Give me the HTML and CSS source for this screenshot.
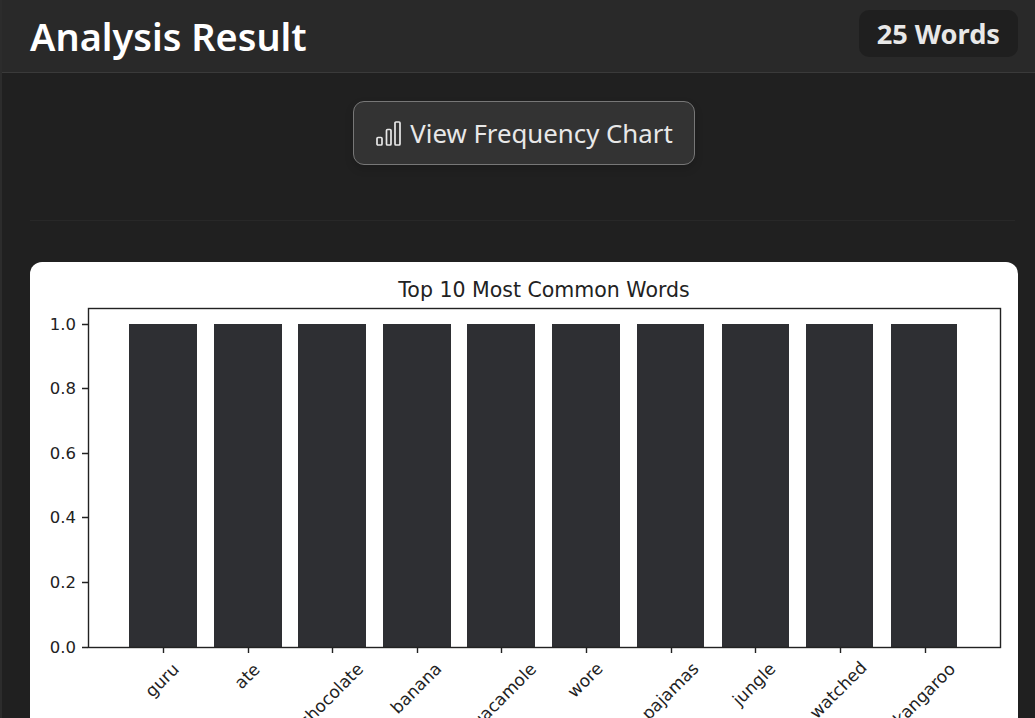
FILE: index.html
```html
<!DOCTYPE html>
<html lang="en">

<head>
    <meta charset="UTF-8">
    <meta name="viewport" content="width=device-width, initial-scale=1.0">
    <title>Analysis Result</title>
    <link rel="stylesheet" href="styles.css">
</head>

<body>
    <div class="panel">
        <header class="panel-header">
            <h1>Analysis Result</h1>
            <span class="word-count">25 Words</span>
        </header>
        <main class="panel-body">
            <div class="actions">
                <button class="chart-btn">
                    <svg class="chart-icon" viewBox="0 0 25 25" fill="none" stroke="currentColor" stroke-width="1.7">
                        <rect x="1" y="16.5" width="5" height="7.5" rx="1" />
                        <rect x="10.5" y="8.5" width="4.5" height="15.5" rx="1" />
                        <rect x="19" y="1" width="5" height="23" rx="1" />
                    </svg>
                    View Frequency Chart
                </button>
            </div>
            <hr class="divider">
            <div class="chart-card">
                <svg class="chart" width="988" height="456" viewBox="0 0 988 456">
                    <text class="chart-title" x="514" y="35">Top 10 Most Common Words</text>

                    <g class="bars">
                        <rect x="99" y="62" width="68" height="323" />
                        <rect x="184" y="62" width="68" height="323" />
                        <rect x="268" y="62" width="68" height="323" />
                        <rect x="353" y="62" width="68" height="323" />
                        <rect x="437" y="62" width="68" height="323" />
                        <rect x="522" y="62" width="68" height="323" />
                        <rect x="607" y="62" width="67" height="323" />
                        <rect x="692" y="62" width="67" height="323" />
                        <rect x="776" y="62" width="67" height="323" />
                        <rect x="861" y="62" width="66" height="323" />
                    </g>

                    <rect class="axes" x="58.5" y="46.5" width="912" height="339" />

                    <g class="ticks">
                        <path d="M52 62.5h6M52 126.5h6M52 191.5h6M52 255.5h6M52 320.5h6M52 385.5h6" />
                        <path d="M133.5 385v6M218.5 385v6M302.5 385v6M387.5 385v6M471.5 385v6M556.5 385v6M641.5 385v6M725.5 385v6M810.5 385v6M895.5 385v6" />
                    </g>

                    <g class="y-labels">
                        <text x="46" y="68">1.0</text>
                        <text x="46" y="132">0.8</text>
                        <text x="46" y="197">0.6</text>
                        <text x="46" y="261">0.4</text>
                        <text x="46" y="326">0.2</text>
                        <text x="46" y="391">0.0</text>
                    </g>

                    <g class="x-labels">
                        <text transform="translate(132 418) rotate(-45)">guru</text>
                        <text transform="translate(217 414) rotate(-45)">ate</text>
                        <text transform="translate(301 433) rotate(-45)">chocolate</text>
                        <text transform="translate(386 426) rotate(-45)">banana</text>
                        <text transform="translate(470 437) rotate(-45)">guacamole</text>
                        <text transform="translate(555 418) rotate(-45)">wore</text>
                        <text transform="translate(640 429) rotate(-45)">pajamas</text>
                        <text transform="translate(724 422) rotate(-45)">jungle</text>
                        <text transform="translate(808 428) rotate(-45)">watched</text>
                        <text transform="translate(894 432) rotate(-45)">kangaroo</text>
                    </g>
                </svg>
            </div>
        </main>
    </div>
</body>

</html>
```

FILE: styles.css
```css
html,
body {
    height: 100%;
}

body {
    margin: 0;
    overflow: hidden;
    background-color: #202020;
    font-family: "Noto Sans", "Open Sans", sans-serif;
    color: #fff;
}

.panel {
    height: 100%;
    border-left: 2px solid #2c2c2c;
}

.panel-header {
    display: flex;
    justify-content: space-between;
    align-items: center;
    height: 72px;
    padding: 0 17px 0 28px;
    background-color: #292929;
    border-bottom: 1px solid #3a3a3a;
}

.panel-header h1 {
    margin: 0;
    font-size: 37.9px;
    font-weight: 600;
}

.word-count {
    margin-bottom: 5px;
    padding: 8px 18px;
    background-color: #1f1f1f;
    border-radius: 10px;
    color: #e8e8e8;
    font-size: 27.2px;
    font-weight: 700;
    line-height: 31px;
}

.panel-body {
    padding: 28px 17px 0 28px;
}

.actions {
    display: flex;
    justify-content: center;
}

.chart-btn {
    display: flex;
    align-items: center;
    gap: 9px;
    height: 64px;
    padding: 0 21px 0 22px;
    background-color: #333;
    border: 1px solid #777;
    border-radius: 11px;
    box-shadow: 0 4px 8px rgba(0, 0, 0, 0.15);
    color: #e8e8e8;
    font-family: inherit;
    font-size: 25.8px;
}

.chart-icon {
    width: 25px;
    height: 25px;
}

.divider {
    height: 1px;
    margin: 55px 3px 41px 0;
    background-color: #282828;
    border: none;
}

.chart-card {
    height: 600px;
    background-color: #fff;
    border-radius: 12px;
    overflow: hidden;
}

.chart {
    display: block;
    font-family: "DejaVu Sans", sans-serif;
    font-size: 16.5px;
}

.chart text {
    fill: #222;
}

.chart .chart-title {
    font-size: 20.5px;
    text-anchor: middle;
}

.bars rect {
    fill: #2e2f33;
}

.axes {
    fill: none;
    stroke: #222;
    stroke-width: 1.4;
}

.ticks path {
    fill: none;
    stroke: #222;
    stroke-width: 1.4;
}

.y-labels text {
    text-anchor: end;
}

.x-labels text {
    font-size: 17px;
    text-anchor: middle;
    dominant-baseline: central;
}
```
